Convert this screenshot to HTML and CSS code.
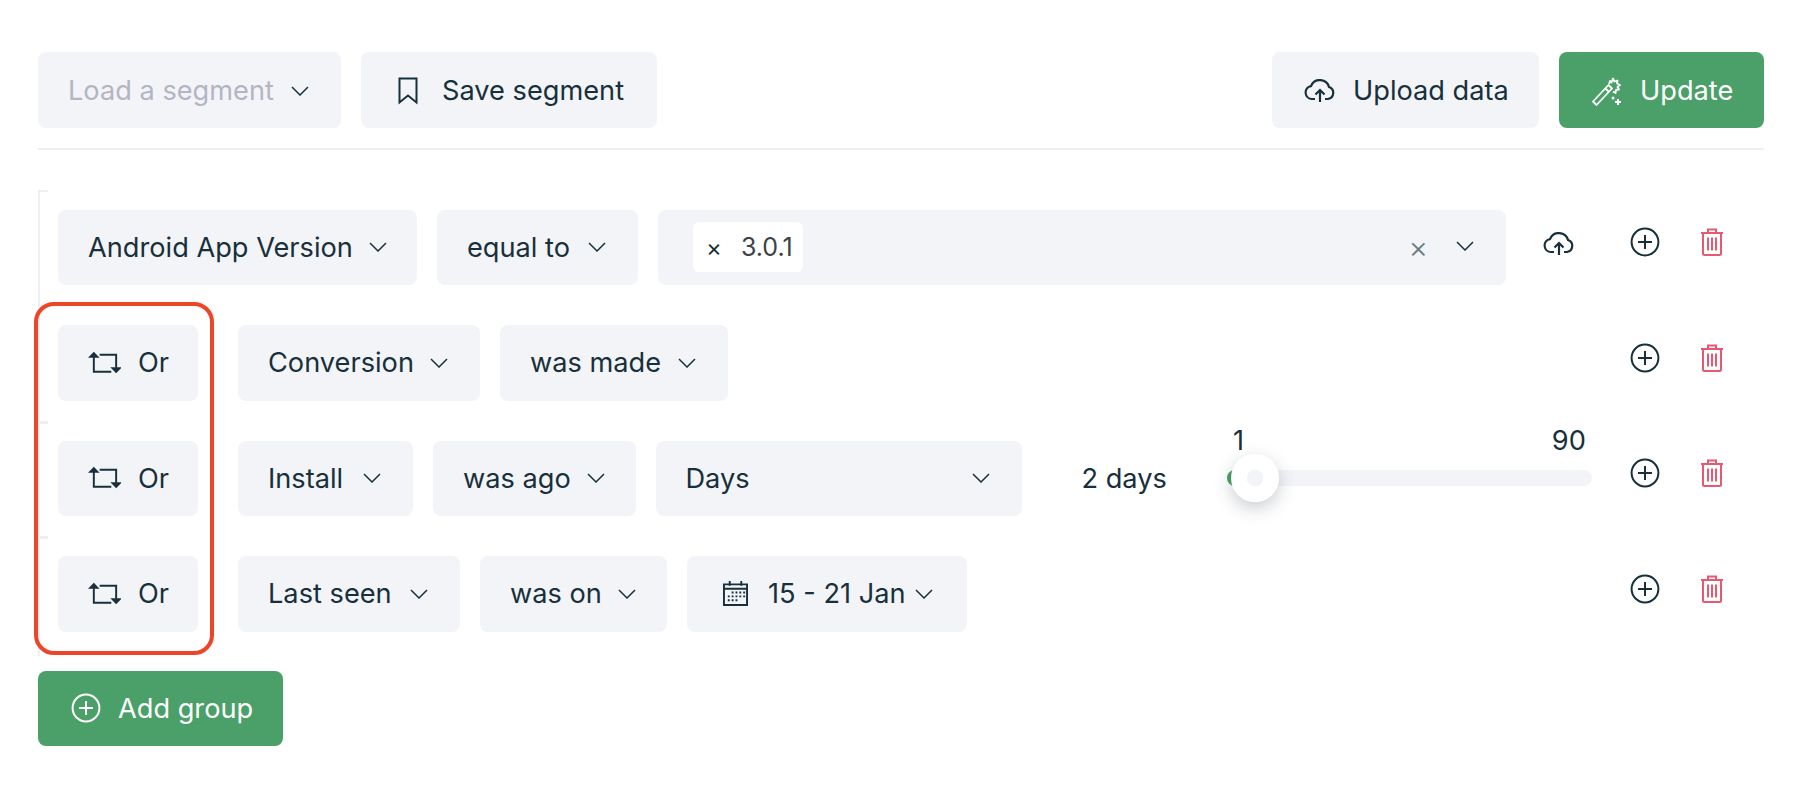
FILE: index.html
```html
<!DOCTYPE html>
<html lang="en">
<head>
<meta charset="utf-8">
<title>Segments</title>
<link rel="stylesheet" href="styles.css">
</head>
<body>
<svg class="defs" width="0" height="0" aria-hidden="true">
  <defs>
    <symbol id="chev" viewBox="0 0 18 10"><path d="M1 1l8 8 8-8" fill="none" stroke="currentColor" stroke-width="1.5"/></symbol>
    <symbol id="cloud" viewBox="0 0 32 24"><path d="M11 20H8a6.500 6.500 0 0 1-1-12.900A9.500 9.500 0 0 1 25 8a6.200 6.200 0 0 1-1 12h-3M16 23V11m-4.500 4.500L16 11l4.500 4.500" fill="none" stroke="currentColor" stroke-width="2.200"/></symbol>
    <symbol id="plus" viewBox="0 0 30 30"><circle cx="15" cy="15" r="13.400" fill="none" stroke="currentColor" stroke-width="2"/><path d="M15 8v14M8 15h14" fill="none" stroke="currentColor" stroke-width="2"/></symbol>
    <symbol id="trash" viewBox="0 0 24 28"><path d="M1 5h22M8 5V1.500h8V5M3 5v20.500a1.500 1.500 0 0 0 1.500 1.500h15a1.500 1.500 0 0 0 1.500-1.500V5M8 9.500v13M12 9.500v13M16 9.500v13" fill="none" stroke="currentColor" stroke-width="2"/></symbol>
    <symbol id="swap" viewBox="0 0 34 24"><path d="M6 5v16h18M12 3.500h17V17" fill="none" stroke="currentColor" stroke-width="2"/><path d="M0 6.500L6 .5l6 6zM23 16.500h12l-6 6z" fill="currentColor"/></symbol>
  </defs>
</svg>
<main class="page">
  <header class="toolbar">
    <button class="btn sel muted">Load a segment <svg class="chev"><use href="#chev"/></svg></button>
    <button class="btn save"><svg class="ico-mark" viewBox="0 0 20 28"><path d="M1.500 1.500h17v24l-8.500-7-8.500 7z" fill="none" stroke="currentColor" stroke-width="2"/></svg>Save segment</button>
    <span class="spring"></span>
    <button class="btn upload"><svg class="ico-cloud"><use href="#cloud"/></svg>Upload data</button>
    <button class="btn green update"><svg class="ico-wand" viewBox="0 0 30 30"><path d="M1 25.500L16.500 9l3.500 3.500L4.500 29zM13.500 12.500l3.500 3.500" fill="none" stroke="currentColor" stroke-width="1.800" stroke-linejoin="round"/><path d="M17 8l1-3 1.500 1.500L21 2.500l1.500 3 3-1-.5 3 3 1.500-2.500 2 1.500 2.500-3 .5-.5 3-2.500-1.500" fill="none" stroke="currentColor" stroke-width="1.800" stroke-linejoin="round"/><path d="M26 23v6M23 26h6" fill="none" stroke="currentColor" stroke-width="2"/><circle cx="21" cy="22" r="1.500" fill="currentColor"/></svg>Update</button>
  </header>

  <section class="group">
    <div class="row">
      <button class="btn sel w-android">Android App Version <svg class="chev"><use href="#chev"/></svg></button>
      <button class="btn sel w-equal">equal to <svg class="chev"><use href="#chev"/></svg></button>
      <div class="btn multi">
        <span class="chip"><i>×</i>3.0.1</span>
        <span class="clear">×</span>
        <svg class="chev wide"><use href="#chev"/></svg>
      </div>
      <button class="act act-cloud"><svg class="ico-cloud"><use href="#cloud"/></svg></button>
      <button class="act act-plus"><svg class="ico-plus"><use href="#plus"/></svg></button>
      <button class="act act-trash"><svg class="ico-trash"><use href="#trash"/></svg></button>
    </div>
    <div class="row">
      <button class="btn or"><svg class="ico-swap"><use href="#swap"/></svg>Or</button>
      <button class="btn sel w-conv">Conversion <svg class="chev"><use href="#chev"/></svg></button>
      <button class="btn sel w-made">was made <svg class="chev"><use href="#chev"/></svg></button>
      <button class="act act-plus push"><svg class="ico-plus"><use href="#plus"/></svg></button>
      <button class="act act-trash"><svg class="ico-trash"><use href="#trash"/></svg></button>
    </div>
    <div class="row">
      <button class="btn or"><svg class="ico-swap"><use href="#swap"/></svg>Or</button>
      <button class="btn sel w-install">Install <svg class="chev"><use href="#chev"/></svg></button>
      <button class="btn sel w-ago">was ago <svg class="chev"><use href="#chev"/></svg></button>
      <button class="btn sel days">Days <svg class="chev"><use href="#chev"/></svg></button>
      <span class="value">2 days</span>
      <div class="slider">
        <div class="scale"><span>1</span><span>90</span></div>
        <div class="track"><span class="fill"></span><span class="thumb"></span></div>
      </div>
      <button class="act act-plus push"><svg class="ico-plus"><use href="#plus"/></svg></button>
      <button class="act act-trash"><svg class="ico-trash"><use href="#trash"/></svg></button>
    </div>
    <div class="row">
      <button class="btn or"><svg class="ico-swap"><use href="#swap"/></svg>Or</button>
      <button class="btn sel w-last">Last seen <svg class="chev"><use href="#chev"/></svg></button>
      <button class="btn sel w-on">was on <svg class="chev"><use href="#chev"/></svg></button>
      <button class="btn date"><svg class="ico-cal" viewBox="0 0 26 26"><path d="M1 3.500h24v21.500H1zM1 8h24" fill="none" stroke="currentColor" stroke-width="2"/><path d="M6 0h2v5H6zM18 0h2v5h-2z" fill="currentColor"/><path d="M9 11h2v2H9zM13 11h2v2h-2zM17 11h2v2h-2zM21 11h2v2h-2zM5 15h2v2H5zM9 15h2v2H9zM13 15h2v2h-2zM17 15h2v2h-2zM21 15h2v2h-2zM5 19h2v2H5zM9 19h2v2H9zM13 19h2v2h-2z" fill="currentColor"/></svg>15 - 21 Jan<svg class="chev"><use href="#chev"/></svg></button>
      <button class="act act-plus push"><svg class="ico-plus"><use href="#plus"/></svg></button>
      <button class="act act-trash"><svg class="ico-trash"><use href="#trash"/></svg></button>
    </div>
    <div class="highlight"></div>
  </section>

  <button class="btn green add"><svg class="ico-plus"><use href="#plus"/></svg>Add group</button>
</main>
</body>
</html>
```

FILE: styles.css
```css
* { box-sizing: border-box; }
html, body { margin: 0; background: #fff; }
body {
  font-family: Inter, "Noto Sans", sans-serif;
  font-size: 27.2px;
  color: #17303b;
}
.defs { position: absolute; }
.page {
  width: 1810px;
  height: 786px;
  padding: 52px 46px 0 38px;
  overflow: hidden;
}
.toolbar {
  display: flex;
  gap: 20px;
  padding-bottom: 20px;
  border-bottom: 2px solid #eeeef3;
}
.toolbar .btn { height: 76px; padding-top: 1px; }
.spring { flex: 1; }
.btn {
  display: flex;
  align-items: center;
  height: 75.5px;
  border: 0;
  border-radius: 8px;
  background: #f3f4f8;
  color: inherit;
  font: inherit;
  white-space: nowrap;
}
.sel { padding: 0 32px 0 30px; justify-content: space-between; }
.muted { color: #b4b5c2; width: 303px; }
.muted .chev { color: #17303b; }
.save { width: 296px; padding: 0 0 0 37px; gap: 24px; }
.upload { width: 267px; padding: 0 0 0 32px; gap: 17px; }
.green { background: #4aa068; color: #fff; }
.update { width: 205px; padding: 0 0 0 33px; gap: 18px; }
.chev { width: 18px; height: 10px; margin-left: 16px; flex: none; }
.ico-mark { width: 20px; height: 28px; }
.ico-cloud { width: 32px; height: 24px; }
.ico-wand { width: 30px; height: 30px; }
.w-android { width: 359px; }
.w-equal { width: 201px; }
.w-conv { width: 242px; }
.w-made { width: 228px; }
.w-install { width: 175px; }
.w-ago { width: 202.500px; }
.w-last { width: 222px; }
.w-on { width: 187px; }
.group {
  position: relative;
  margin-top: 39.500px;
  padding: 20px 0 24px 18px;
  border-left: 2px solid #eeeef3;
  display: flex;
  flex-direction: column;
  gap: 40px;
}
.group::before {
  content: "";
  position: absolute;
  left: 0;
  top: 0;
  width: 8px;
  height: 2px;
  background: #eeeef3;
}
.row {
  position: relative;
  display: flex;
  align-items: center;
  gap: 20px;
  padding-right: 40px;
}
.row + .row::before {
  content: "";
  position: absolute;
  left: -18px;
  top: -20px;
  width: 8px;
  height: 3px;
  background: #eeeef3;
}
.multi {
  flex: 0 0 848px;
  padding: 0 32px 0 35px;
}
.chip {
  display: flex;
  align-items: center;
  height: 50px;
  width: 110px;
  padding: 0 0 0 13px;
  background: #fff;
  border-radius: 6px;
  font-size: 25px;
  color: #3c4246;
}
.chip i { font-style: normal; margin-right: 19px; font-size: 24px; color: #17303b; }
.clear { margin-left: auto; color: #6b7a82; font-size: 30px; font-weight: 300; }
.chev.wide { margin-left: 28px; margin-top: -3px; }
.act {
  display: flex;
  padding: 0;
  border: 0;
  background: none;
  color: inherit;
  margin-top: -10px;
}
.act-cloud { margin-left: 17px; margin-top: -6px; }
.act-plus { margin-left: 35px; }
.act-plus.push { margin-left: auto; }
.act-trash { margin-left: 20px; color: #e8596f; }
.ico-plus { width: 30px; height: 30px; }
.ico-trash { width: 24px; height: 28px; }
.or { width: 140px; margin-right: 20px; padding: 0 0 0 30px; gap: 17px; }
.ico-swap { width: 33px; height: 24px; }
.days { width: 366px; }
.value { margin-left: 40px; }
.slider { position: relative; width: 365px; margin-left: 40px; }
.scale {
  position: absolute;
  left: 6px;
  right: 6px;
  bottom: 29px;
  display: flex;
  justify-content: space-between;
}
.track { position: relative; height: 16px; border-radius: 8px; background: #f3f4f8; }
.fill { position: absolute; left: 0; top: 0; width: 16px; height: 16px; border-radius: 8px; background: #4aa068; }
.thumb {
  position: absolute;
  left: 4px;
  top: -16px;
  width: 48px;
  height: 48px;
  border-radius: 50%;
  background: radial-gradient(circle, #f3f4f8 8px, #fff 8.5px);
  box-shadow: 0 6px 18px rgba(23, 48, 59, .24);
}
.date { width: 280px; padding: 0 0 0 36px; }
.ico-cal { width: 25px; height: 27px; margin-right: 20px; }
.date .chev { margin-left: 9px; }
.highlight {
  position: absolute;
  left: -6px;
  top: 112px;
  width: 180px;
  height: 353px;
  border: 4.500px solid #ee4528;
  border-radius: 20px;
}
.add { margin-top: 15px; width: 245px; padding: 0 0 0 33px; gap: 17px; position: relative; }
```
